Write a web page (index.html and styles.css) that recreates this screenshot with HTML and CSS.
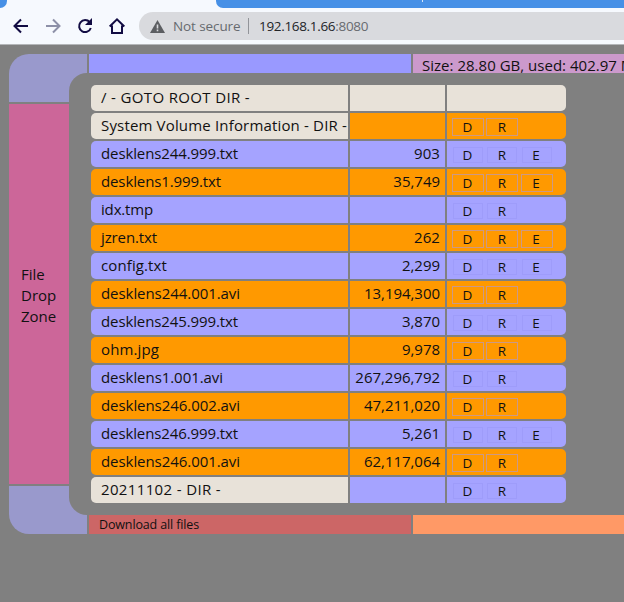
FILE: index.html
```html
<!DOCTYPE html>
<html lang="en">
<head>
<meta charset="utf-8">
<title>192.168.1.66:8080</title>
<link rel="stylesheet" href="styles.css">
</head>
<body>
<header class="browser">
  <div class="tabs"><div class="tab-left"></div><div class="tab-active"></div><div class="tab-rest"><i></i></div></div>
  <div class="toolbar">
    <svg class="nav" viewBox="0 0 32 28"><path d="M28 14H15M21 7.500L14.500 14l6.500 6.500"/></svg>
    <svg class="nav dim" viewBox="0 0 32 28"><path d="M14 14h13M21 7.500l6.500 6.500-6.500 6.500"/></svg>
    <svg class="nav" viewBox="0 0 32 28"><path d="M25.700 10.200A6 6 0 1 0 26.800 16"/><path class="tip" d="M28 6v7h-7z"/></svg>
    <svg class="nav" viewBox="0 0 32 28"><path d="M13.700 14.500L21 7.300l7.300 7.200M16 13.500V21h10v-7.500"/></svg>
    <div class="address">
      <svg class="warning" viewBox="0 0 15 13"><path d="M7.500 0L15 13H0z"/><path class="mark" d="M7.500 4.500v4M7.500 9.500v1.700"/></svg>
      <span class="security">Not secure</span>
      <span class="divider"></span>
      <span class="url">192.168.1.66<span class="port">:8080</span></span>
    </div>
  </div>
</header>
<div class="app">
  <aside class="side">
    <div class="elbow top"></div>
    <div class="drop"><div>File<br>Drop<br>Zone</div></div>
    <div class="elbow bottom"></div>
  </aside>
  <main>
    <div class="bar"><div class="lilac"></div><div class="usage"><span>Size: 28.80 GB, used: 402.97 MB</span></div></div>
    <div class="files" id="files"></div>
    <div class="bar"><div class="download"><span>Download all files</span></div><div class="peach"></div></div>
  </main>
</div>
<script src="files.js"></script>
</body>
</html>
```
FILE: styles.css
```css
* { box-sizing: border-box; }
body {
  margin: 0;
  width: 624px;
  height: 602px;
  overflow: hidden;
  background: #808080;
  color: #111;
  font: 15px/20px "Open Sans", "Noto Sans", sans-serif;
}
.browser { height: 45px; background: #f6f9fe; border-bottom: 1px solid #b4b6b9; }
.tabs { display: flex; height: 8px; }
.tab-left { width: 7px; background: #4790e6; border-bottom-right-radius: 7px; }
.tab-active { width: 209px; }
.tab-rest { flex: 1; background: #4790e6; border-bottom-left-radius: 7px; }
.tab-rest i { display: block; width: 1px; height: 2px; margin-left: 206px; background: #d5e6fa; }
.toolbar { display: flex; height: 36px; padding-top: 4px; }
.nav { flex: none; width: 32px; height: 28px; fill: none; stroke: #120c43; stroke-width: 2; }
.nav.dim { stroke: #8d90a8; }
.nav .tip { fill: #120c43; stroke: none; }
.address {
  display: flex;
  align-items: center;
  flex: 1;
  margin-left: 11px;
  padding-left: 11px;
  border-radius: 14px 0 0 14px;
  height: 28px;
  background: #d9dade;
  font-size: 13.5px;
  white-space: nowrap;
}
.warning { width: 15px; height: 13px; fill: #5c5e62; }
.mark { stroke: #d9dade; stroke-width: 1.6; }
.security { width: 68px; margin-left: 8px; color: #666a6f; letter-spacing: -.1px; }
.divider { width: 1px; height: 16px; margin: 0 10px 0 7px; background: #929499; }
.url { letter-spacing: -.32px; color: #222428; }
.port { color: #686b70; }
.app { display: flex; padding: 9px 0 0 9px; }
.side { display: flex; flex-direction: column; gap: 2px; width: 78px; flex: none; }
.elbow { height: 48px; background: #9999cc; display: flex; justify-content: flex-end; overflow: hidden; }
.elbow::after { content: ""; width: 18px; height: 29px; background: #808080; }
.elbow.top { align-items: flex-end; border-top-left-radius: 20px; }
.elbow.top::after { border-top-left-radius: 18px; }
.elbow.bottom { border-bottom-left-radius: 20px; }
.elbow.bottom::after { border-bottom-left-radius: 18px; }
.drop {
  display: flex;
  align-items: center;
  width: 60px;
  height: 380px;
  padding: 2px 0 0 12px;
  background: #cc6699;
  line-height: 21px;
}
main { margin-left: 2px; flex: 1; min-width: 0; }
.bar { display: grid; grid-template-columns: 322px 211px; gap: 2px; height: 19px; }
.lilac { background: #9999ff; }
.usage { background: #cc99cc; padding: 1px 0 0 9px; overflow: hidden; white-space: nowrap; }
.download { background: #cc6666; padding-left: 10px; font-size: 12.5px; line-height: 19px; }
.peach { background: #ff9966; }
.files { display: grid; gap: 2px; margin: 12px 0 12px 2px; }
.row { display: grid; grid-template-columns: 257px 95px 119px; gap: 2px; height: 26px; }
.row > div { background: #a5a3ff; line-height: 24px; white-space: nowrap; overflow: hidden; }
.row.orange > div { background: #ff9900; }
.row.root > div, .row > div.folder, .row.orange > div.folder { background: #e8e2d9; }
.name { padding-left: 10px; border-radius: 5px 0 0 5px; }
.size { padding-right: 5px; text-align: right; }
.actions { display: flex; gap: 2.3px; padding: 5px 0 0 5px; border-radius: 0 5px 5px 0; }
.name span, .size span, .usage span, .download span { display: inline-block; white-space: nowrap; }
button {
  width: 32px;
  height: 18px;
  padding: 0 1px 0 0;
  border: 1px solid #a5a3ff;
  background: #a5a3ff;
  color: #111;
  font: 13.5px/15px "Open Sans", "Noto Sans", sans-serif;
  box-shadow: inset 0 0 0 1px #9e9cfa;
}
.orange button { background: transparent; border-color: #cc9985; box-shadow: none; }
```
FILE: files.js
```js
const rows = [
  ["/ - GOTO ROOT DIR -", "", "", "root", 149],
  ["System Volume Information - DIR -", "", "DR", "orange", 246],
  ["desklens244.999.txt", "903", "DRE", "", 137],
  ["desklens1.999.txt", "35,749", "DRE", "orange", 120],
  ["idx.tmp", "", "DR", "", 52],
  ["jzren.txt", "262", "DRE", "orange", 56],
  ["config.txt", "2,299", "DRE", "", 66],
  ["desklens244.001.avi", "13,194,300", "DR", "orange", 139],
  ["desklens245.999.txt", "3,870", "DRE", "", 137],
  ["ohm.jpg", "9,978", "DR", "orange", 58],
  ["desklens1.001.avi", "267,296,792", "DR", "", 122],
  ["desklens246.002.avi", "47,211,020", "DR", "orange", 139],
  ["desklens246.999.txt", "5,261", "DRE", "", 137],
  ["desklens246.001.avi", "62,117,064", "DR", "orange", 139],
  ["20211102 - DIR -", "", "DR", "", 120]
];

function fit(span, width) {
  const natural = span.getBoundingClientRect().width;
  span.style.letterSpacing = (width - natural) / span.textContent.length + "px";
}

const files = document.getElementById("files");
for (const [name, size, actions, kind, width] of rows) {
  const row = document.createElement("div");
  row.className = "row " + kind;
  const folder = name.endsWith("DIR -") ? " folder" : "";
  row.innerHTML = `<div class="name${folder}"><span>${name}</span></div>` +
    `<div class="size"><span>${size}</span></div>` +
    `<div class="actions">${[...actions].map(a => `<button>${a}</button>`).join("")}</div>`;
  files.append(row);
  fit(row.querySelector(".name span"), width);
  if (size) {
    const commas = size.split(",").length - 1;
    fit(row.querySelector(".size span"), (size.length - commas) * 8.63 + commas * 3.5);
  }
}
fit(document.querySelector(".usage span"), 222);
fit(document.querySelector(".download span"), 100);
```
